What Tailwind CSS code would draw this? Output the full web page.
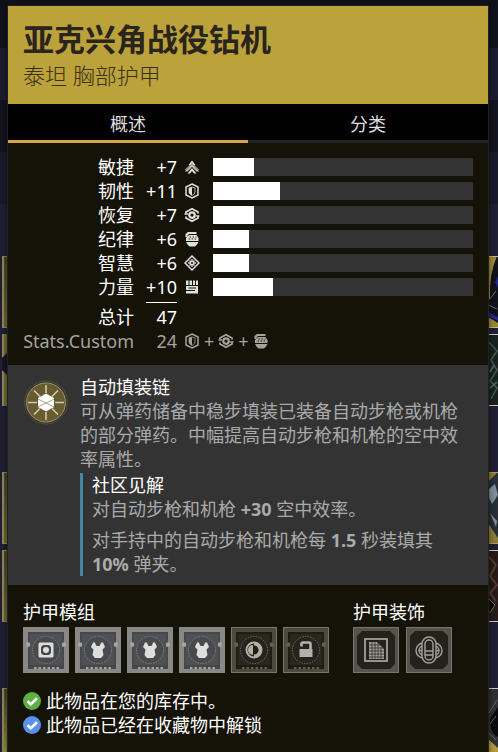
<!DOCTYPE html>
<html lang="zh-CN">
<head>
<meta charset="utf-8">
<meta name="viewport" content="width=device-width, initial-scale=1">
<title>亚克兴角战役钻机</title>
<script src="https://cdn.jsdelivr.net/npm/@tailwindcss/browser@4"></script>
</head>
<body class="relative min-h-screen overflow-x-hidden bg-[#1c1b2d] font-['Noto_Sans','Noto_Sans_CJK_SC',sans-serif] text-lg leading-6 text-white">

<svg class="hidden" aria-hidden="true">
  <symbol id="i-mob" viewBox="0 0 32 32">
    <path d="M16 3 23 12H20L16 8 12 12H9Z" fill="currentColor"/>
    <path d="M16 10 31 25H25L16 16 7 25H1Z" fill="currentColor" opacity=".8"/>
    <path d="M16 6 22 13 31 22H28L16 11 4 22H1L10 13Z" fill="currentColor" opacity=".6"/>
    <path d="M16 18 25 29H20L16 24 12 29H7Z" fill="currentColor"/>
  </symbol>
  <symbol id="i-res" viewBox="0 0 32 32">
    <path d="M16 2 28 8V24L16 30 4 24V8Z" fill="none" stroke="currentColor" stroke-width="3"/>
    <path d="M16 8 22 10V18C22 21 19 23 16 25 13 23 10 21 10 18V10Z" fill="none" stroke="currentColor" stroke-width="1.6"/>
    <path d="M16 8V25C13 23 10 21 10 18V10Z" fill="currentColor"/>
  </symbol>
  <symbol id="i-rec" viewBox="0 0 32 32">
    <path d="M4 13V10L16 3.500 28 10V13M4 19V22L16 28.500 28 22V19" fill="none" stroke="currentColor" stroke-width="3.600"/>
    <path d="M1 14H8M24 18H31" fill="none" stroke="currentColor" stroke-width="3"/>
    <circle cx="16" cy="16" r="5.500" fill="none" stroke="currentColor" stroke-width="4.500"/>
  </symbol>
  <symbol id="i-dis" viewBox="0 0 32 32">
    <path d="M3 12V6L8 2H25V6H10L7 9V12Z" fill="currentColor"/>
    <path d="M10 8H25L29 14V20H4V14Z" fill="currentColor"/>
    <path d="M4 22H29L26 27 22 31H11L7 27Z" fill="currentColor"/>
    <path d="M11 12H14M17 12H20M23 12H25M9 16H12M15 16H18M21 16H24" stroke="#151207" stroke-width="1.800"/>
  </symbol>
  <symbol id="i-int" viewBox="0 0 32 32">
    <path d="M16 2 30 16 16 30 2 16Z" fill="none" stroke="currentColor" stroke-width="3"/>
    <path d="M16 8V24M8 16H24M11 11 21 21M21 11 11 21" stroke="currentColor" stroke-width="2.800"/>
    <circle cx="16" cy="16" r="2" fill="#151207"/>
  </symbol>
  <symbol id="i-str" viewBox="0 0 32 32">
    <path d="M4 3H9V12H4ZM11 3H16V12H11ZM18 3H22V12H18ZM24 3H28V12H24ZM4 14H28V20H28V29H4Z" fill="currentColor"/>
    <path d="M9 18H24M4 23H22" stroke="#151207" stroke-width="2.200"/>
  </symbol>
  <symbol id="plate" viewBox="0 0 46 46">
    <path d="M5 5H41V16A2 2 0 0 0 41 20V42H5V20A2 2 0 0 0 5 16Z" fill="currentColor"/>
    <path d="M7 7H39V15L42 18 39 21V38H7V21L4 18 7 15Z" fill="#fff" opacity=".05"/>
    <circle cx="23" cy="23" r="13.500" fill="#000" opacity=".08"/>
    <circle cx="23" cy="23" r="13.500" fill="none" stroke="#aaaaa6" stroke-width=".7" stroke-dasharray="1.500 1.200" opacity=".7"/>
  </symbol>
  <symbol id="pins" viewBox="0 0 46 46">
    <circle cx="5" cy="17.500" r="2.200" fill="currentColor"/><circle cx="41" cy="17.500" r="2.200" fill="currentColor"/>
    <path d="M11 41H36" stroke="currentColor" stroke-width="2" stroke-dasharray="2.500 2"/>
  </symbol>
  <symbol id="i-chest" viewBox="0 0 46 46">
    <path d="M18 15.500H20L21 18.500Q23 19.500 25 18.500L26 15.500H28L30 20 27.500 22.500 28.500 28 26 31H20L17.500 28 18.500 22.500 16 20Z" fill="currentColor"/>
  </symbol>
  <symbol id="frame" viewBox="0 0 46 46">
    <rect width="46" height="46" fill="#55534b"/>
    <path d="M9 4H37L42 9V37L37 42H9L4 37V9Z" fill="#24221b"/>
    <rect x=".5" y=".5" width="45" height="45" fill="none" stroke="#77756e"/>
  </symbol>
  <symbol id="i-check" viewBox="0 0 18 18">
    <circle cx="9" cy="9" r="9" fill="currentColor"/>
    <path d="M4.500 9.200 7.800 12.300 14 6.300" fill="none" stroke="#fff" stroke-width="2.600"/>
  </symbol>
</svg>

<!-- Inventory grid behind the popup -->
<div class="absolute inset-0 overflow-hidden" aria-hidden="true">
  <div class="h-12 bg-[#11111c]"></div>
  <div class="h-13 bg-[#1d1c2e]"></div>
  <div class="h-13 bg-[#141421]"></div>
  <div class="h-13 bg-[#1a1a2b]"></div>
  <div class="flex flex-col gap-[66px] bg-[#201f33] pt-[52px]">
    <div class="flex flex-col gap-1.5">
      <div class="flex h-18 justify-between">
        <div class="ml-0.5 w-2 border-y border-l-2 border-[#8d875b] bg-linear-to-b from-[#4d451f] to-[#746a32]"></div>
        <svg class="h-18 w-[10px]" viewBox="0 0 10 72"><path fill="#111219" d="M0 0H10V72H0Z"/><path fill="#9b8739" d="M0 0H9Q1 18 2 42L0 46ZM0 61 10 67V72H0Z"/><path fill="#25258f" d="M7 26 10 20V32ZM0 56 10 61V65L0 60Z"/><path stroke="#68716c" d="M2 43 8 35M0 49 9 53"/><path stroke="#b9b88c" d="M0 .5H10M0 71.500H10"/></svg>
      </div>
      <div class="flex h-18 justify-between">
        <svg class="ml-0.5 h-18 w-2" viewBox="0 0 8 72"><path fill="#746a32" d="M0 0H8V72H0Z"/><path fill="#8d875b" d="M0 0H2V72H0Z"/><path fill="#171321" d="M0 24 8 16V44L0 36Z"/></svg>
        <svg class="h-18 w-[10px]" viewBox="0 0 10 72"><path fill="#17221f" d="M0 0H10V72H0Z"/><path fill="none" stroke="#47584f" stroke-width="1.500" d="M1 8 9 17 3 26 9 36 2 47 9 54 3 65"/><path stroke="#3c6170" stroke-width="2" d="M2 54 9 48M2 38 6 31"/><path stroke="#c9c9c6" d="M0 .5H10M0 71.500H10"/></svg>
      </div>
    </div>
    <div class="flex flex-col gap-1.5">
      <div class="flex h-18 justify-between">
        <div class="ml-0.5 w-2 border-y border-l-2 border-[#8d875b] bg-linear-to-b from-[#4d451f] to-[#746a32]"></div>
        <svg class="h-18 w-[10px]" viewBox="0 0 10 72"><path fill="#262f36" d="M0 0H10V72H0Z"/><path fill="#8b7a38" d="M0 0H10L0 10ZM0 51 10 66V72H0Z"/><path fill="#7b8e98" d="M1 17 7 12 10 23 4 32 1 26ZM2 41 9 49 8 55Z"/><path stroke="#a79c50" d="M0 .5H10M0 71.500H10"/></svg>
      </div>
      <div class="flex h-18 justify-between">
        <div class="ml-0.5 w-2 border-y border-l-2 border-[#8d875b] bg-linear-to-b from-[#4d451f] to-[#746a32]"></div>
        <svg class="h-18 w-[10px]" viewBox="0 0 10 72"><path fill="#251a17" d="M0 0H10V72H0Z"/><path fill="none" stroke="#553a2c" stroke-width="2" d="M1 7 8 15 2 26 9 35 2 43 8 51"/><path stroke="#80695a" d="M1 49 7 55 2 63"/><path stroke="#c9c9c6" d="M0 .5H10M0 71.500H10"/></svg>
      </div>
    </div>
    <div class="flex h-18 justify-between">
      <div class="ml-0.5 w-2 border-y border-l-2 border-[#8d875b] bg-linear-to-b from-[#4d451f] to-[#a19a48]"></div>
      <svg class="h-18 w-[10px]" viewBox="0 0 10 72"><path fill="#303033" d="M0 0H10V72H0Z"/><path fill="#09090d" d="M2 31 10 19V49Q2 46 2 31Z"/><path stroke="#68686c" d="M1 25 9 12M2 36 8 28M1 45 8 52"/><path fill="#b09b3c" d="M0 51 10 60V72H0Z"/><path stroke="#c9c9c6" d="M0 .5H10"/></svg>
    </div>
  </div>
</div>

<main class="relative mr-2.5 ml-2 pt-1.5">
  <article class="min-h-[calc(100vh-6px)] bg-[#151207] shadow-[0_0_0_1px_#222222,0_0_5px_2px_#00000066]">
    <header class="bg-[#bca23b] px-[15px] pt-3 pb-3 text-[#29241c]">
      <h1 class="text-[31px] leading-[42px] font-bold">亚克兴角战役钻机</h1>
      <p class="pb-0.5 text-[22px] leading-[30px] font-light text-[#3a3118]">泰坦 胸部护甲</p>
    </header>

    <nav class="grid grid-cols-2 bg-black" role="tablist">
      <button type="button" role="tab" aria-selected="true" class="h-[39px] border-b-3 border-[#d1a84f] pt-1 text-[#dddddd]">概述</button>
      <button type="button" role="tab" aria-selected="false" class="h-[39px] border-b-3 border-[#222222] pt-1 text-[#dddddd]">分类</button>
    </nav>

    <section class="px-[15px] py-3">
      <table class="w-full table-fixed border-collapse text-right">
        <colgroup><col class="w-[111px]"><col class="w-[43px]"><col class="w-9"><col></colgroup>
        <tbody>
          <tr class="h-6"><th scope="row" class="p-0 font-normal">敏捷</th><td class="p-0">+7</td><td class="p-0 pl-[7px]"><svg class="size-4 text-[#e2e0dc]"><use href="#i-mob"/></svg></td><td class="p-0"><div class="h-[18px] bg-[#333333]"><div class="h-full bg-white" style="width:15.8%"></div></div></td></tr>
          <tr class="h-6"><th scope="row" class="p-0 font-normal">韧性</th><td class="p-0">+11</td><td class="p-0 pl-[7px]"><svg class="size-4 text-[#e2e0dc]"><use href="#i-res"/></svg></td><td class="p-0"><div class="h-[18px] bg-[#333333]"><div class="h-full bg-white" style="width:25.8%"></div></div></td></tr>
          <tr class="h-6"><th scope="row" class="p-0 font-normal">恢复</th><td class="p-0">+7</td><td class="p-0 pl-[7px]"><svg class="size-4 text-[#e2e0dc]"><use href="#i-rec"/></svg></td><td class="p-0"><div class="h-[18px] bg-[#333333]"><div class="h-full bg-white" style="width:15.8%"></div></div></td></tr>
          <tr class="h-6"><th scope="row" class="p-0 font-normal">纪律</th><td class="p-0">+6</td><td class="p-0 pl-[7px]"><svg class="size-4 text-[#e2e0dc]"><use href="#i-dis"/></svg></td><td class="p-0"><div class="h-[18px] bg-[#333333]"><div class="h-full bg-white" style="width:13.9%"></div></div></td></tr>
          <tr class="h-6"><th scope="row" class="p-0 font-normal">智慧</th><td class="p-0">+6</td><td class="p-0 pl-[7px]"><svg class="size-4 text-[#e2e0dc]"><use href="#i-int"/></svg></td><td class="p-0"><div class="h-[18px] bg-[#333333]"><div class="h-full bg-white" style="width:13.9%"></div></div></td></tr>
          <tr class="h-6"><th scope="row" class="p-0 font-normal">力量</th><td class="p-0">+10</td><td class="p-0 pl-[7px]"><svg class="size-4 text-[#e2e0dc]"><use href="#i-str"/></svg></td><td class="p-0"><div class="h-[18px] bg-[#333333]"><div class="h-full bg-white" style="width:23.1%"></div></div></td></tr>
        </tbody>
        <tfoot>
          <tr><th scope="row" class="p-0 pt-1.5 font-normal">总计</th><td class="p-0 pt-[3px]"><span class="ml-auto block w-[31px] border-t border-white pt-0.5">47</span></td><td></td><td></td></tr>
          <tr class="h-6 text-[#a5a39e]"><th scope="row" class="p-0 font-normal">Stats.Custom</th><td class="p-0">24</td><td colspan="2" class="p-0 pl-[7px]"><div class="flex items-center gap-1"><svg class="size-4"><use href="#i-res"/></svg><span>+</span><svg class="size-4"><use href="#i-rec"/></svg><span>+</span><svg class="size-4"><use href="#i-dis"/></svg></div></td></tr>
        </tfoot>
      </table>
    </section>

    <section class="flex gap-3 bg-[#333333] px-[15px] py-[9px]">
      <svg class="mt-1.5 size-[45px] shrink-0" viewBox="0 0 45 45" aria-hidden="true">
        <circle cx="23" cy="22.500" r="21.500" fill="none" stroke="#544d31" stroke-width="1"/>
        <circle cx="23" cy="22.500" r="19.500" fill="#685b32" stroke="#9b946f" stroke-width="1"/>
        <g stroke="#d0caaa" stroke-width="1.600"><path d="M23 5V13M23 32V40M5 22.500H14M32 22.500H41M11 10.500 17 16.500M29 28.500 35 34.500M35 10.500 29 16.500M11 34.500 17 28.500"/></g>
        <path d="M23 13.500 31 18V27L23 31.500 15 27V18Z" fill="#fff"/>
        <path d="M15 19 31 27M15 27 31 19" stroke="#aba587" stroke-width="1"/>
      </svg>
      <div class="min-w-0 flex-1 pt-px text-[#aaaaaa] *:leading-6">
        <h2 class="text-white">自动填装链</h2>
        <p>可从弹药储备中稳步填装已装备自动步枪或机枪的部分弹药。中幅提高自动步枪和机枪的空中效率属性。</p>
        <div class="mt-0.5 border-l-3 border-[#4786a8] pl-[9px]">
          <h3 class="text-white">社区见解</h3>
          <p>对自动步枪和机枪 <b>+30</b> 空中效率。</p>
          <p class="mt-[7px]">对手持中的自动步枪和机枪每 <b>1.5</b> 秒装填其 <b>10%</b> 弹夹。</p>
        </div>
      </div>
    </section>

    <section class="flex gap-6 px-[15px] pt-[15px]">
      <div>
        <h2 class="mb-[3px]">护甲模组</h2>
        <div class="flex gap-1.5">
          <button type="button" aria-label="通用模组" class="size-[46px] bg-[#888887] text-[#47484c]">
            <svg class="size-[46px]" viewBox="0 0 46 46"><use href="#plate"/><use href="#pins" class="text-[#a5a5a4]"/><rect x="15.500" y="15.500" width="15" height="15" rx="1.500" fill="#dededc"/><path d="M20 18H26L28 20V26L26 28H20L18 26V20Z" fill="#47484c"/><circle cx="23" cy="23" r="3" fill="#dededc"/></svg>
          </button>
          <button type="button" aria-label="胸部模组 1" class="size-[46px] bg-[#888887] text-[#47484c]"><svg class="size-[46px]" viewBox="0 0 46 46"><use href="#plate"/><use href="#pins" class="text-[#a5a5a4]"/><use href="#i-chest" class="text-[#dededc]"/></svg></button>
          <button type="button" aria-label="胸部模组 2" class="size-[46px] bg-[#888887] text-[#47484c]"><svg class="size-[46px]" viewBox="0 0 46 46"><use href="#plate"/><use href="#pins" class="text-[#a5a5a4]"/><use href="#i-chest" class="text-[#dededc]"/></svg></button>
          <button type="button" aria-label="胸部模组 3" class="size-[46px] bg-[#888887] text-[#47484c]"><svg class="size-[46px]" viewBox="0 0 46 46"><use href="#plate"/><use href="#pins" class="text-[#a5a5a4]"/><use href="#i-chest" class="text-[#dededc]"/></svg></button>
          <button type="button" aria-label="工艺模组" class="size-[46px] bg-[#4d4a3f] text-[#1f1c12]">
            <svg class="size-[46px]" viewBox="0 0 46 46"><use href="#plate"/><use href="#pins" class="text-[#625f55]"/><circle cx="23" cy="23" r="7.500" fill="#1f1c12" stroke="#b3b0a7" stroke-width="2"/><path d="M22 18V28A5 5 0 0 1 22 18ZM23 15A8 8 0 0 1 23 31V27.500A4.500 4.500 0 0 0 23 18.500Z" fill="#b3b0a7"/><rect x=".5" y=".5" width="45" height="45" fill="none" stroke="#77756e"/></svg>
          </button>
          <button type="button" aria-label="已锁定" class="size-[46px] bg-[#4d4a3f] text-[#1f1c12]">
            <svg class="size-[46px]" viewBox="0 0 46 46"><use href="#plate"/><use href="#pins" class="text-[#625f55]"/><path d="M16.500 22H29.500V30H16.500Z" fill="#b3b0a7"/><path d="M18.500 19.500V17Q18.500 15.500 20 15.500H26Q27.500 15.500 27.500 17V23" fill="none" stroke="#b3b0a7" stroke-width="2.600"/><rect x=".5" y=".5" width="45" height="45" fill="none" stroke="#77756e"/></svg>
          </button>
        </div>
      </div>
      <div>
        <h2 class="mb-[3px]">护甲装饰</h2>
        <div class="flex gap-[7px]">
          <button type="button" aria-label="着色器" class="size-[46px]">
            <svg class="size-[46px]" viewBox="0 0 46 46"><use href="#frame"/><rect x="12" y="12" width="22" height="22" fill="none" stroke="#a3a098" stroke-width="1.800"/><path d="M16 15H24L31 22V32H16Z" fill="#a3a098"/><path d="M16 18H27M16 21H31M16 24H31M16 27H31M16 30H31M19 15V32M22 15V32M25 15V32M28 20V32" stroke="#24221b" stroke-width=".7"/></svg>
          </button>
          <button type="button" aria-label="皮肤" class="size-[46px]">
            <svg class="size-[46px]" viewBox="0 0 46 46"><use href="#frame"/><g fill="none" stroke="#a3a098" stroke-width="1.400"><rect x="10" y="16" width="26" height="15" rx="7.500"/><rect x="13" y="19" width="20" height="9" rx="4.500"/><rect x="16" y="10" width="14" height="26" rx="7" fill="#24221b"/><rect x="19" y="13" width="8" height="20" rx="4"/><path d="M13 23.500H16M19 24H27M19 28H27M30 23.500H33"/></g></svg>
          </button>
        </div>
      </div>
    </section>

    <ul class="px-[15px] pt-4 pb-3">
      <li class="flex items-center gap-[5px]"><svg class="size-[18px] shrink-0 text-[#5faf43]"><use href="#i-check"/></svg>此物品在您的库存中。</li>
      <li class="flex items-center gap-[5px]"><svg class="size-[18px] shrink-0 text-[#5a90ee]"><use href="#i-check"/></svg>此物品已经在收藏物中解锁</li>
    </ul>
  </article>
</main>
</body>
</html>
